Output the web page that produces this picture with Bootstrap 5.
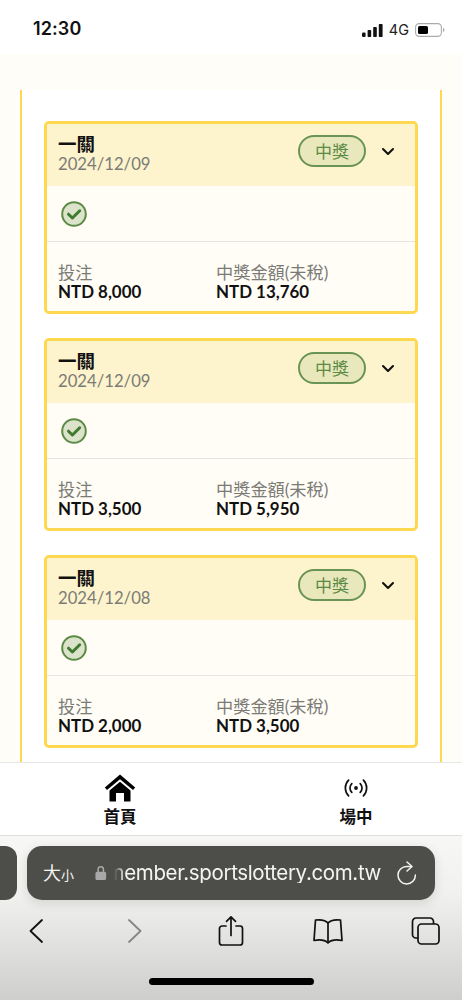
<!DOCTYPE html>
<html lang="zh-Hant">
<head>
<meta charset="utf-8">
<title>中獎紀錄</title>
<link href="https://cdn.jsdelivr.net/npm/bootstrap@5.3.0/dist/css/bootstrap.min.css" rel="stylesheet">
<style>
html,body{margin:0;height:1000px;overflow:hidden;background:#fff}
body{font-family:"Lato","Noto Sans CJK TC",sans-serif;color:#111}
.phone{height:1000px;width:462px}
.statusbar{height:54px;background:#fff;padding:4px 17px 0 33px;flex:none}
.clock{font:600 18px/1 "Inter","Liberation Sans",sans-serif;letter-spacing:.1px}
.status-icons{margin-top:2px}
.fourg{font:400 14.500px/1 "Inter","Liberation Sans",sans-serif;color:#222;margin:0 6px}
.stage{flex:1 1 auto;min-height:0;background:#fffdf7;padding:36px 20px 0;overflow:hidden}
.sheet{height:100%;background:#fff;border-left:2px solid #fdd850;border-right:2px solid #fdd850;padding:31px 22px 0;overflow:hidden}
.ticket{border:3px solid #fdd850;border-radius:5px;background:#fffdf6;margin-bottom:24px;height:193px;overflow:hidden}
.ticket-head{height:62px;background:#fdf3cc;padding:0 20px 2px 11px}
.ticket-title{font-size:18.500px;font-weight:700;line-height:20px;color:#111}
.ticket-date{font-size:16.700px;line-height:20px;color:#7b7b76}
.head-right{margin-bottom:6px}
.pill{width:68px;height:32px;border:2px solid #6a9455;border-radius:16px;background:#e9e8bd;color:#5b8a45;font-size:17px;line-height:1}
.chev{margin-left:15px}
.ticket-mid{height:56px;padding:0 0 0 14px;border-bottom:1px solid #e5e4df}
.ticket-foot{padding:21px 11px 0}
.col-l{width:158px}
.lbl{font-size:17.200px;line-height:20px;color:#7b7b76}
.amt{font-size:16.900px;line-height:18px;font-weight:700;color:#111}
.tabbar{height:74px;flex:none;background:#fff;border-top:1px solid #e6e6e4;border-bottom:1px solid #dededc}
.tabitem{width:100px;font-size:16.500px;font-weight:700;line-height:18px;color:#111;flex:none}
.tab-first{margin-left:70px}
.tab-second{margin-left:136px}
.tabicon{height:34px;margin-bottom:3px}
.chrome{height:164px;flex:none;background:linear-gradient(#f7f7f5 0%,#f1f1ef 35%,#e1e1df 65%,#cececc 100%);padding-top:10px}
.urlrow{height:54px;gap:10px}
.sliver{width:17px;height:54px;background:#4d4d49;border-radius:0 12px 12px 0}
.urlbar{width:408px;height:54px;background:#4d4d49;border-radius:15px;color:#f4f4f2;padding:0 17px 0 16px;box-shadow:0 3px 12px rgba(0,0,0,.12)}
.aa{font-size:18px;line-height:1;width:52px;flex:none}
.aa small{font-size:13px}
.urltext{white-space:nowrap;font:400 20.500px/1 "Inter","Liberation Sans",sans-serif;letter-spacing:-.35px;-webkit-mask-image:linear-gradient(90deg,transparent 7px,#000 18px);mask-image:linear-gradient(90deg,transparent 7px,#000 18px)}
.refresh{margin-left:15px;flex:none}
.toolrow{height:58px;padding-top:3px}
.slot-a,.slot-b,.slot-c,.slot-d,.slot-e{flex:none}
.slot-a{width:72px}
.slot-b{width:126px}
.slot-c{width:66px}
.slot-d{width:128px}
.slot-e{width:66px}
.homebar{width:165px;height:7px;border-radius:4px;background:#000;margin:20px auto 0}
</style>
</head>
<body>
<div class="phone d-flex flex-column">
  <div class="statusbar d-flex justify-content-between align-items-center">
    <span class="clock">12:30</span>
    <span class="status-icons d-flex align-items-center">
      <svg width="21" height="13" viewBox="0 0 21 13"><g fill="#111"><rect x="0" y="8.500" width="3.600" height="4.500" rx="1.200"/><rect x="5.600" y="6" width="3.600" height="7" rx=".8"/><rect x="11.200" y="3" width="3.600" height="10" rx=".8"/><rect x="16.800" y="0" width="3.800" height="13" rx=".8"/></g></svg>
      <span class="fourg">4G</span>
      <svg width="30" height="14" viewBox="0 0 30 14"><rect x=".6" y=".6" width="25.800" height="12.800" rx="3.600" fill="none" stroke="#aaa" stroke-width="1.100"/><rect x="3" y="3" width="10" height="8" rx="1.600" fill="#000"/><path d="M28 5v4c.9-.3 1.400-1 1.400-2s-.5-1.700-1.400-2z" fill="#aaa"/></svg>
    </span>
  </div>

  <main class="stage">
    <div class="sheet">
      <section class="ticket">
        <div class="ticket-head d-flex justify-content-between align-items-center">
          <div><div class="ticket-title">一關</div><div class="ticket-date">2024/12/09</div></div>
          <div class="head-right d-flex align-items-center">
            <span class="pill d-flex justify-content-center align-items-center">中獎</span>
            <svg class="chev" width="14" height="9" viewBox="0 0 14 9"><path d="M2 2l5 5 5-5" fill="none" stroke="#111" stroke-width="2.100" stroke-linecap="round" stroke-linejoin="round"/></svg>
          </div>
        </div>
        <div class="ticket-mid d-flex align-items-center">
          <svg width="26" height="26" viewBox="0 0 26 26"><circle cx="13" cy="13" r="11.800" fill="#dbe4cb" stroke="#5a8a45" stroke-width="2"/><path d="M7.500 13.200l3.900 3.800 7.300-7.200" fill="none" stroke="#3f7a2e" stroke-width="3" stroke-linecap="round" stroke-linejoin="round"/></svg>
        </div>
        <div class="ticket-foot d-flex">
          <div class="col-l"><div class="lbl">投注</div><div class="amt">NTD 8,000</div></div>
          <div><div class="lbl">中獎金額(未稅)</div><div class="amt">NTD 13,760</div></div>
        </div>
      </section>
      <section class="ticket">
        <div class="ticket-head d-flex justify-content-between align-items-center">
          <div><div class="ticket-title">一關</div><div class="ticket-date">2024/12/09</div></div>
          <div class="head-right d-flex align-items-center">
            <span class="pill d-flex justify-content-center align-items-center">中獎</span>
            <svg class="chev" width="14" height="9" viewBox="0 0 14 9"><path d="M2 2l5 5 5-5" fill="none" stroke="#111" stroke-width="2.100" stroke-linecap="round" stroke-linejoin="round"/></svg>
          </div>
        </div>
        <div class="ticket-mid d-flex align-items-center">
          <svg width="26" height="26" viewBox="0 0 26 26"><circle cx="13" cy="13" r="11.800" fill="#dbe4cb" stroke="#5a8a45" stroke-width="2"/><path d="M7.500 13.200l3.900 3.800 7.300-7.200" fill="none" stroke="#3f7a2e" stroke-width="3" stroke-linecap="round" stroke-linejoin="round"/></svg>
        </div>
        <div class="ticket-foot d-flex">
          <div class="col-l"><div class="lbl">投注</div><div class="amt">NTD 3,500</div></div>
          <div><div class="lbl">中獎金額(未稅)</div><div class="amt">NTD 5,950</div></div>
        </div>
      </section>
      <section class="ticket">
        <div class="ticket-head d-flex justify-content-between align-items-center">
          <div><div class="ticket-title">一關</div><div class="ticket-date">2024/12/08</div></div>
          <div class="head-right d-flex align-items-center">
            <span class="pill d-flex justify-content-center align-items-center">中獎</span>
            <svg class="chev" width="14" height="9" viewBox="0 0 14 9"><path d="M2 2l5 5 5-5" fill="none" stroke="#111" stroke-width="2.100" stroke-linecap="round" stroke-linejoin="round"/></svg>
          </div>
        </div>
        <div class="ticket-mid d-flex align-items-center">
          <svg width="26" height="26" viewBox="0 0 26 26"><circle cx="13" cy="13" r="11.800" fill="#dbe4cb" stroke="#5a8a45" stroke-width="2"/><path d="M7.500 13.200l3.900 3.800 7.300-7.200" fill="none" stroke="#3f7a2e" stroke-width="3" stroke-linecap="round" stroke-linejoin="round"/></svg>
        </div>
        <div class="ticket-foot d-flex">
          <div class="col-l"><div class="lbl">投注</div><div class="amt">NTD 2,000</div></div>
          <div><div class="lbl">中獎金額(未稅)</div><div class="amt">NTD 3,500</div></div>
        </div>
      </section>
    </div>
  </main>

  <nav class="tabbar d-flex">
    <div class="tabitem tab-first d-flex flex-column align-items-center pt-2">
      <div class="tabicon d-flex align-items-center justify-content-center"><svg width="32" height="28" viewBox="0 0 32 28"><path d="M16 .5L.8 13.500 3 16 16 5.200 29 16l2.200-2.500z" fill="#000"/><path d="M5.500 16.500L16 7.800l10.500 8.700v11H20V19h-8v8.500H5.500z" fill="#000"/></svg></div>
      <span>首頁</span>
    </div>
    <div class="tabitem tab-second d-flex flex-column align-items-center pt-2">
      <div class="tabicon d-flex align-items-center justify-content-center"><svg width="24" height="20" viewBox="0 0 24 20"><circle cx="12" cy="10" r="1.900" fill="#111"/><g fill="none" stroke="#111" stroke-width="1.700" stroke-linecap="round"><path d="M7.800 5.600a6.200 6.200 0 0 0 0 8.800M16.200 5.600a6.200 6.200 0 0 1 0 8.800"/><path d="M4.600 2.200a11 11 0 0 0 0 15.600M19.400 2.200a11 11 0 0 1 0 15.600"/></g></svg></div>
      <span>場中</span>
    </div>
  </nav>

  <div class="chrome">
    <div class="urlrow d-flex">
      <div class="sliver"></div>
      <div class="urlbar d-flex align-items-center">
        <span class="aa">大<small>小</small></span>
        <svg width="13" height="16" viewBox="0 0 13 16"><path d="M3.500 7V4a3 3 0 0 1 6 0v3" fill="none" stroke="#a8a8a8" stroke-width="1.700"/><rect x="0.500" y="6.500" width="12" height="9.500" rx="1.800" fill="#a8a8a8"/></svg>
        <span class="urltext ms-auto">member.sportslottery.com.tw</span>
        <svg class="refresh" width="22" height="26" viewBox="0 0 22 26"><g fill="none" stroke="#f4f4f2" stroke-width="1.500" stroke-linecap="round" stroke-linejoin="round"><path d="M15 6.500h-4.300A8.700 8.700 0 1 0 19.400 15"/><path d="M11 2l5 4.500-5 4.500"/></g></svg>
      </div>
    </div>
    <div class="toolrow d-flex align-items-center">
      <div class="slot-a d-flex justify-content-center"><svg width="16" height="26" viewBox="0 0 16 26"><path d="M14 2L2.500 13 14 24" fill="none" stroke="#111" stroke-width="1.800" stroke-linecap="round" stroke-linejoin="round"/></svg></div>
      <div class="slot-b d-flex justify-content-center"><svg width="16" height="26" viewBox="0 0 16 26"><path d="M2 2l11.500 11L2 24" fill="none" stroke="#858585" stroke-width="1.800" stroke-linecap="round" stroke-linejoin="round"/></svg></div>
      <div class="slot-c d-flex justify-content-center"><svg width="26" height="32" viewBox="0 0 26 32"><g fill="none" stroke="#111" stroke-width="1.700" stroke-linecap="round" stroke-linejoin="round"><path d="M8 11H4a2.500 2.500 0 0 0-2.500 2.500v14A2.500 2.500 0 0 0 4 30h18a2.500 2.500 0 0 0 2.500-2.500v-14A2.500 2.500 0 0 0 22 11h-4"/><path d="M13 20.500V2M8.500 6.300L13 1.800l4.500 4.500"/></g></svg></div>
      <div class="slot-d d-flex justify-content-center"><svg width="30" height="26" viewBox="0 0 30 26"><g fill="none" stroke="#111" stroke-width="1.700" stroke-linejoin="round"><path d="M15 5C12.500 2 7 1.500 2.500 2L1 22.500C6 21.500 12 22 15 25c3-3 9-3.500 14-2.500L27.500 2C23 1.500 17.500 2 15 5z"/><path d="M15 5v20"/></g></svg></div>
      <div class="slot-e d-flex justify-content-center"><svg width="29" height="28" viewBox="0 0 29 28"><g fill="none" stroke="#111" stroke-width="1.700"><rect x="7" y="7" width="21" height="20" rx="3.500"/><path d="M7 21H5a3.500 3.500 0 0 1-3.500-3.500V4.500A3.500 3.500 0 0 1 5 1h14a3.500 3.500 0 0 1 3.500 3.500V7"/></g></svg></div>
    </div>
    <div class="homebar"></div>
  </div>
</div>
</body>
</html>
